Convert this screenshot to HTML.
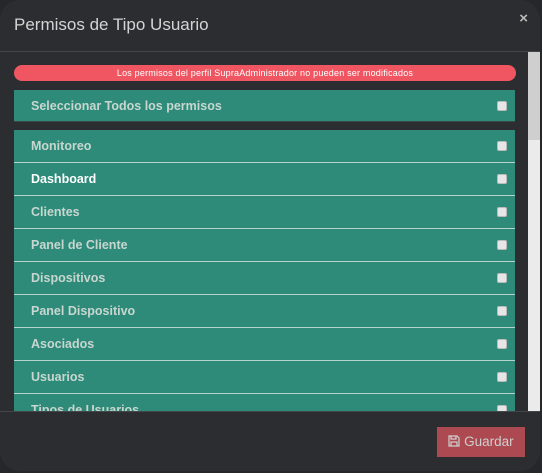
<!DOCTYPE html>
<html><head><style>
*{margin:0;padding:0;box-sizing:border-box}
html,body{width:542px;height:473px;overflow:hidden;background:#26272b;font-family:"Liberation Sans",sans-serif}
.modal{position:absolute;left:0;top:0;width:540px;height:471px;background:#2c2d31;border-radius:20px;overflow:hidden}
.hdr{height:52px;border-bottom:1px solid #45464a;position:relative}
.hdr h4{position:absolute;left:14px;top:15px;font-weight:normal;font-size:17px;color:#d4d4d4}
.x{position:absolute;right:12px;top:10px;color:#bbb;font-size:15px;font-weight:bold}
.sb{position:absolute;left:528px;top:52px;width:12px;height:360px;background:#ebebeb;z-index:2}
.sb div{height:88px;background:#cfcfcf}
.alert{position:absolute;left:14px;top:65px;width:502px;height:16px;background:#f05661;border-radius:8px;color:#fff;font-size:9px;text-align:center;line-height:16px;letter-spacing:.2px}
.row{position:absolute;left:14px;width:501px;height:33px;background:#2e8b79;color:#c8d6d0;font-weight:bold;font-size:12.5px;line-height:33px;padding-left:17px}
.row.sel{height:32px;line-height:32px;border-bottom:1px solid #3c4a47}
.row.b{border-top:1px solid #b7d3cc}
.cb{position:absolute;right:8px;top:11px;width:10px;height:10px;background:#e6e6e6;border-radius:2px;border:1px solid #bbb}
.ftr{position:absolute;left:0;top:411px;width:540px;height:62px;background:#2c2d31;border-top:1px solid #45464a;z-index:3}
.btn{position:absolute;left:437px;top:15px;width:88px;height:30px;background:#ad4950;color:#cfcfcf;font-size:13.5px;line-height:30px;text-align:center}
</style></head><body>
<div class="modal">
<div class="hdr"><h4>Permisos de Tipo Usuario</h4><span class="x">×</span></div>
<div class="sb"><div></div></div>
<div class="alert">Los permisos del perfil SupraAdministrador no pueden ser modificados</div>
<div class="row sel" style="top:90px">Seleccionar Todos los permisos<span class="cb"></span></div>
<div class="row" style="top:130px">Monitoreo<span class="cb"></span></div>
<div class="row b" style="top:162px;color:#fff">Dashboard<span class="cb"></span></div>
<div class="row b" style="top:195px">Clientes<span class="cb"></span></div>
<div class="row b" style="top:228px">Panel de Cliente<span class="cb"></span></div>
<div class="row b" style="top:261px">Dispositivos<span class="cb"></span></div>
<div class="row b" style="top:294px">Panel Dispositivo<span class="cb"></span></div>
<div class="row b" style="top:327px">Asociados<span class="cb"></span></div>
<div class="row b" style="top:360px">Usuarios<span class="cb"></span></div>
<div class="row b" style="top:393px">Tipos de Usuarios<span class="cb"></span></div>
<div class="ftr"><div class="btn"><svg width="12" height="12" viewBox="0 0 12 12" style="vertical-align:-1px"><path d="M1 1h8l2 2v8H1z M3 1v3h5V1 M3 11V7h6v4" fill="none" stroke="#cfcfcf" stroke-width="1.2"/></svg> Guardar</div></div>
</div>
</body></html>
